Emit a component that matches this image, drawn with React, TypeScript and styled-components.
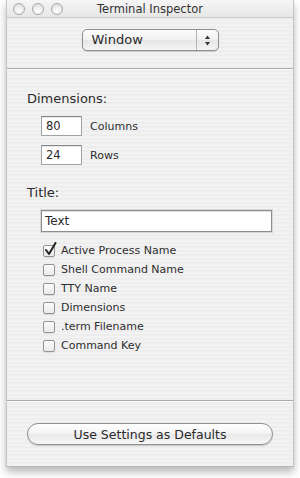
import React from "react";
import styled, { createGlobalStyle } from "styled-components";

const Global = createGlobalStyle`
  html, body { margin: 0; padding: 0; background: #ffffff; }
  body { font-family: "DejaVu Sans", "Lucida Grande", sans-serif; color: #2e2e2e; }
  * { box-sizing: border-box; }
`;

const Page = styled.div`
  width: 300px;
  height: 478px;
  padding: 0 6px;
  overflow: hidden;
`;

const Window = styled.div`
  width: 288px;
  height: 467px;
  display: flex;
  flex-direction: column;
  border-left: 1px solid #c4c4c4;
  border-right: 1px solid #c4c4c4;
  border-bottom: 1px solid #b8b8b8;
  background: repeating-linear-gradient(
    to bottom,
    #f2f2f2 0px,
    #f2f2f2 2px,
    #ededed 2px,
    #ededed 4px
  );
  box-shadow: 0 5px 8px rgba(0, 0, 0, 0.28);
`;

const TitleBar = styled.div`
  height: 18px;
  flex: none;
  position: relative;
  display: flex;
  align-items: center;
  justify-content: center;
  border-bottom: 1px solid #c9c9c9;
  background: linear-gradient(#f6f6f6, #e6e6e6);
`;

const Lights = styled.div`
  position: absolute;
  left: 6px;
  top: 3px;
  display: flex;
  gap: 7px;
`;

const Light = styled.span`
  width: 12px;
  height: 12px;
  border-radius: 50%;
  border: 1px solid #a9a9a9;
  background: radial-gradient(circle at 50% 70%, #ffffff 0%, #e4e4e4 70%, #d0d0d0 100%);
`;

const TitleText = styled.span`
  font-size: 11.5px;
  color: #333;
`;

const TopSection = styled.div`
  height: 50px;
  flex: none;
  display: flex;
  justify-content: center;
  padding-top: 11px;
`;

const Popup = styled.div`
  width: 137px;
  height: 22px;
  display: flex;
  border: 1px solid #8e8e8e;
  border-radius: 5px;
  background: linear-gradient(#fdfdfd, #f1f1f1 50%, #e6e6e6 51%, #f4f4f4);
  box-shadow: 0 1px 1px rgba(0, 0, 0, 0.15);
  overflow: hidden;
`;

const PopupLabel = styled.span`
  flex: 1;
  padding-left: 9px;
  font-size: 13px;
  line-height: 20px;
  color: #2a2a2a;
`;

const Stepper = styled.span`
  width: 22px;
  border-left: 1px solid #b5b5b5;
  display: flex;
  align-items: center;
  justify-content: center;
`;

const Separator = styled.div`
  height: 2px;
  flex: none;
  border-top: 1px solid #a8a8a8;
  border-bottom: 1px solid #fbfbfb;
`;

const Main = styled.div`
  flex: 1;
  padding: 21px 0 0 20px;
  display: flex;
  flex-direction: column;
`;

const Heading = styled.div`
  font-size: 13px;
  line-height: 16px;
  color: #2a2a2a;
`;

const DimRows = styled.div`
  display: flex;
  flex-direction: column;
  gap: 9px;
  padding: 9px 0 0 14px;
  margin-bottom: 20px;
`;

const FieldRow = styled.div`
  display: flex;
  align-items: center;
  gap: 8px;
`;

const Field = styled.div<{ $w: number; $h: number }>`
  width: ${(p) => p.$w}px;
  height: ${(p) => p.$h}px;
  background: #ffffff;
  border: 1px solid #a2a2a2;
  border-top-color: #858585;
  box-shadow: inset 0 1px 1px rgba(0, 0, 0, 0.1);
  font-size: 11.5px;
  padding-left: 4px;
  display: flex;
  align-items: center;
  color: #2a2a2a;
`;

const TitleField = styled(Field)`
  font-size: 12px;
  padding-left: 3px;
  border: 1px solid #8d8d8d;
  box-shadow: 0 0 0 1px #d6d6d6, inset 0 1px 1px rgba(0, 0, 0, 0.12);
`;

const SmallLabel = styled.span`
  font-size: 11px;
  color: #2e2e2e;
`;

const TitleBlock = styled.div`
  display: flex;
  flex-direction: column;
  padding: 9px 0 0 14px;
`;

const CheckList = styled.div`
  display: flex;
  flex-direction: column;
  padding: 9px 0 0 2px;
`;

const CheckRow = styled.label`
  height: 19px;
  display: flex;
  align-items: center;
  gap: 6px;
  font-size: 11px;
  color: #2e2e2e;
`;

const Box = styled.span`
  position: relative;
  width: 12px;
  height: 12px;
  border: 1px solid #939393;
  border-radius: 2px;
  background: linear-gradient(#fbfbfb, #eaeaea);
  box-shadow: 0 1px 0 rgba(0, 0, 0, 0.08);
`;

const Mark = styled.svg`
  position: absolute;
  left: 0px;
  top: -4px;
`;

const Bottom = styled.div`
  height: 64px;
  flex: none;
  display: flex;
  align-items: flex-start;
  justify-content: center;
  padding-top: 21px;
`;

const PillButton = styled.div`
  width: 246px;
  height: 22px;
  border: 1px solid #909090;
  border-radius: 11px;
  background: linear-gradient(#ffffff, #f3f3f3 50%, #e8e8e8 51%, #f7f7f7);
  box-shadow: 0 1px 1px rgba(0, 0, 0, 0.18);
  display: flex;
  align-items: center;
  justify-content: center;
  font-size: 12.5px;
  color: #2a2a2a;
`;

const options = [
  { label: "Active Process Name", checked: true },
  { label: "Shell Command Name", checked: false },
  { label: "TTY Name", checked: false },
  { label: "Dimensions", checked: false },
  { label: ".term Filename", checked: false },
  { label: "Command Key", checked: false },
];

export default function App() {
  return (
    <>
      <Global />
      <Page>
        <Window>
          <TitleBar>
            <Lights>
              <Light />
              <Light />
              <Light />
            </Lights>
            <TitleText>Terminal Inspector</TitleText>
          </TitleBar>
          <TopSection>
            <Popup>
              <PopupLabel>Window</PopupLabel>
              <Stepper>
                <svg width="7" height="11" viewBox="0 0 7 11">
                  <path d="M3.5 0.5 L6 4 L1 4 Z" fill="#333" />
                  <path d="M3.5 10.5 L6 7 L1 7 Z" fill="#333" />
                </svg>
              </Stepper>
            </Popup>
          </TopSection>
          <Separator />
          <Main>
            <Heading>Dimensions:</Heading>
            <DimRows>
              <FieldRow>
                <Field $w={41} $h={20}>80</Field>
                <SmallLabel>Columns</SmallLabel>
              </FieldRow>
              <FieldRow>
                <Field $w={41} $h={20}>24</Field>
                <SmallLabel>Rows</SmallLabel>
              </FieldRow>
            </DimRows>
            <Heading>Title:</Heading>
            <TitleBlock>
              <TitleField $w={231} $h={22}>Text</TitleField>
              <CheckList>
                {options.map((o) => (
                  <CheckRow key={o.label}>
                    <Box>
                      {o.checked && (
                        <Mark width="13" height="14" viewBox="0 0 13 14">
                          <path
                            d="M2 8 L5 12 L11.5 1"
                            fill="none"
                            stroke="#222"
                            strokeWidth="2"
                            strokeLinecap="round"
                            strokeLinejoin="round"
                          />
                        </Mark>
                      )}
                    </Box>
                    {o.label}
                  </CheckRow>
                ))}
              </CheckList>
            </TitleBlock>
          </Main>
          <Separator />
          <Bottom>
            <PillButton>Use Settings as Defaults</PillButton>
          </Bottom>
        </Window>
      </Page>
    </>
  );
}
